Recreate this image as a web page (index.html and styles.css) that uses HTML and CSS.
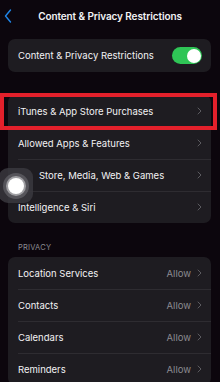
FILE: index.html
```html
<!DOCTYPE html>
<html>
<head>
<meta charset="utf-8">
<link rel="stylesheet" href="styles.css">
</head>
<body>
<div class="screen">
  <header class="nav">
    <svg class="back" width="8" height="14" viewBox="0 0 8 14"><path d="M6.5 1 L1.5 7 L6.5 13" fill="none" stroke="#1f86e8" stroke-width="1.4" stroke-linecap="round" stroke-linejoin="round"/></svg>
    <div class="title">Content &amp; Privacy Restrictions</div>
  </header>

  <section class="card card-top">
    <div class="row">
      <span class="label">Content &amp; Privacy Restrictions</span>
      <span class="toggle"><span class="knob"></span></span>
    </div>
  </section>

  <section class="card card-mid">
    <div class="row"><span class="label">iTunes &amp; App Store Purchases</span><svg class="chev" width="5" height="8" viewBox="0 0 5 8"><path d="M1 1 L4 4 L1 7" fill="none" stroke="#5c5b60" stroke-width="1" stroke-linecap="round" stroke-linejoin="round"/></svg></div>
    <div class="row"><span class="label">Allowed Apps &amp; Features</span><svg class="chev" width="5" height="8" viewBox="0 0 5 8"><path d="M1 1 L4 4 L1 7" fill="none" stroke="#5c5b60" stroke-width="1" stroke-linecap="round" stroke-linejoin="round"/></svg></div>
    <div class="row"><span class="label indent">Store, Media, Web &amp; Games</span><svg class="chev" width="5" height="8" viewBox="0 0 5 8"><path d="M1 1 L4 4 L1 7" fill="none" stroke="#5c5b60" stroke-width="1" stroke-linecap="round" stroke-linejoin="round"/></svg></div>
    <div class="row"><span class="label">Intelligence &amp; Siri</span><svg class="chev" width="5" height="8" viewBox="0 0 5 8"><path d="M1 1 L4 4 L1 7" fill="none" stroke="#5c5b60" stroke-width="1" stroke-linecap="round" stroke-linejoin="round"/></svg></div>
  </section>

  <div class="section-label">PRIVACY</div>

  <section class="card card-priv">
    <div class="row"><span class="label">Location Services</span><span class="value">Allow</span><svg class="chev" width="5" height="8" viewBox="0 0 5 8"><path d="M1 1 L4 4 L1 7" fill="none" stroke="#5c5b60" stroke-width="1" stroke-linecap="round" stroke-linejoin="round"/></svg></div>
    <div class="row"><span class="label">Contacts</span><span class="value">Allow</span><svg class="chev" width="5" height="8" viewBox="0 0 5 8"><path d="M1 1 L4 4 L1 7" fill="none" stroke="#5c5b60" stroke-width="1" stroke-linecap="round" stroke-linejoin="round"/></svg></div>
    <div class="row"><span class="label">Calendars</span><span class="value">Allow</span><svg class="chev" width="5" height="8" viewBox="0 0 5 8"><path d="M1 1 L4 4 L1 7" fill="none" stroke="#5c5b60" stroke-width="1" stroke-linecap="round" stroke-linejoin="round"/></svg></div>
    <div class="row"><span class="label">Reminders</span><span class="value">Allow</span><svg class="chev" width="5" height="8" viewBox="0 0 5 8"><path d="M1 1 L4 4 L1 7" fill="none" stroke="#5c5b60" stroke-width="1" stroke-linecap="round" stroke-linejoin="round"/></svg></div>
  </section>

  <div class="highlight"></div>
  <div class="assistive"><span class="dot"></span></div>
</div>
</body>
</html>
```

FILE: styles.css
```css
html, body {
  margin: 0;
  padding: 0;
  background: #0c060d;
}
.screen {
  position: relative;
  width: 220px;
  height: 382px;
  overflow: hidden;
  font-family: Inter, "Liberation Sans", sans-serif;
  color: #f2f2f4;
  background: #0c060d;
}
.nav {
  position: relative;
  height: 32px;
  display: flex;
  align-items: center;
  justify-content: center;
}
.back {
  position: absolute;
  left: 4px;
  top: 9px;
}
.title {
  font-size: 10px;
  font-weight: 600;
  letter-spacing: -0.1px;
}
.card {
  margin: 0 9px 0 8px;
  background: #1e1c21;
  border-radius: 7px;
  overflow: hidden;
}
.card-top {
  margin-top: 7px;
}
.card-top .row {
  height: 33px;
  border: none;
}
.card-mid {
  margin-top: 23px;
}
.row {
  height: 32px;
  display: flex;
  align-items: center;
  padding: 0 9px 0 10px;
  position: relative;
  font-size: 9.5px;
}
.row + .row::before {
  content: "";
  position: absolute;
  top: 0;
  left: 10px;
  right: 0;
  height: 1px;
  background: #2e2c31;
}
.label {
  flex: 1;
  white-space: nowrap;
}
.indent {
  padding-left: 21px;
}
.value {
  color: #8b8a90;
  margin-right: 6px;
}
.chev {
  flex: none;
}
.toggle {
  width: 30px;
  height: 17px;
  border-radius: 9px;
  background: #2fc556;
  position: relative;
  margin-right: 0;
}
.knob {
  position: absolute;
  right: 1.5px;
  top: 1.5px;
  width: 14px;
  height: 14px;
  border-radius: 50%;
  background: #ffffff;
}
.section-label {
  margin: 20px 0 5px 18px;
  font-size: 7.5px;
  color: #8b8a90;
  letter-spacing: 0.2px;
}
.highlight {
  position: absolute;
  left: 0;
  top: 93px;
  width: 217px;
  height: 37px;
  box-sizing: border-box;
  border: 4px solid #e3202b;
}
.assistive {
  position: absolute;
  left: -1px;
  top: 168px;
  width: 34px;
  height: 35px;
  border-radius: 9px;
  background: rgba(58, 56, 62, 0.85);
  display: flex;
  align-items: center;
  justify-content: center;
}
.dot {
  width: 16px;
  height: 16px;
  border-radius: 50%;
  background: #ffffff;
  box-shadow: 0 0 0 2px rgba(220, 220, 222, 0.55), 0 0 0 5px rgba(150, 150, 155, 0.35);
}
```
